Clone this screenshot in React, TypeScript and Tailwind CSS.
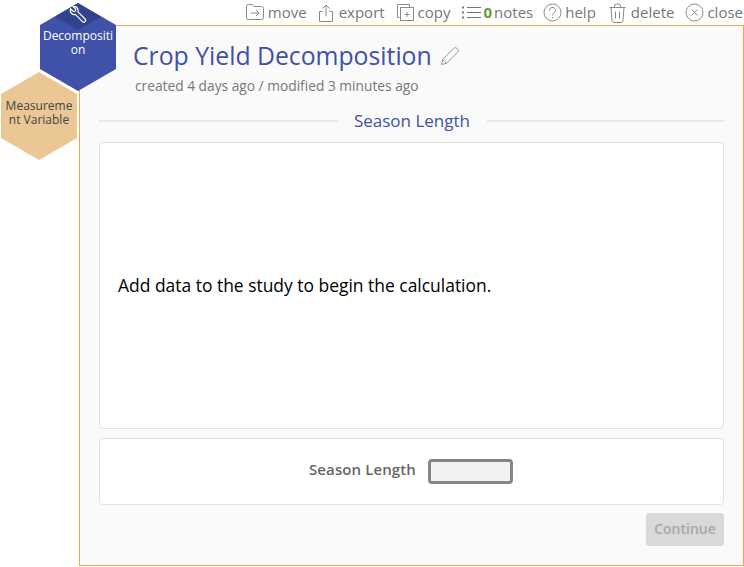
import React from "react";

const hexClip = "[clip-path:polygon(50%_0,100%_25%,100%_75%,50%_100%,0_75%,0_25%)]";

const MoveIcon = () => (
  <svg width="18" height="17" viewBox="0 0 18 17" fill="none" stroke="#8a8a8a" strokeWidth="1">
    <path d="M.500 2.500a2 2 0 0 1 2-2h4l1.500 2h7.500a2 2 0 0 1 2 2v9a2 2 0 0 1-2 2h-13a2 2 0 0 1-2-2z" />
    <path d="M5 9h8M10 6l3 3-3 3" />
  </svg>
);
const ExportIcon = () => (
  <svg width="16" height="18" viewBox="0 0 16 18" fill="none" stroke="#8a8a8a" strokeWidth="1">
    <path d="M4.500 7.500H1.500v10h13v-10h-3" />
    <path d="M8 12.500V1M4.500 4.500L8 1l3.500 3.500" />
  </svg>
);
const CopyIcon = () => (
  <svg width="18" height="17" viewBox="0 0 18 17" fill="none" stroke="#8a8a8a" strokeWidth="1">
    <path d="M2.500 13.500h-2v-13h12v3" />
    <rect x="3.500" y="3.500" width="13" height="13" />
    <path d="M10 8v5M7.500 10.500h5" />
  </svg>
);
const NotesIcon = () => (
  <svg width="20" height="16" viewBox="0 0 20 16" fill="none" stroke="#777777" strokeWidth="1">
    <path d="M5 2.500h14M5 7.500h14M5 12.500h14" />
    <path d="M0 2.500h2M0 7.500h2M0 12.500h2" strokeWidth="2" />
  </svg>
);
const HelpIcon = () => (
  <svg width="19" height="19" viewBox="0 0 19 19" fill="none" stroke="#8a8a8a" strokeWidth="1">
    <circle cx="9.500" cy="9.500" r="8.500" />
    <path d="M6.500 7.500a3 3 0 1 1 4.500 2.500c-1 .6-1.500 1.100-1.500 2.300" />
    <path d="M9.500 14v1.200" />
  </svg>
);
const TrashIcon = () => (
  <svg width="17" height="20" viewBox="0 0 17 20" fill="none" stroke="#8a8a8a" strokeWidth="1">
    <path d="M.500 4.500h16M5.500 4.500V3a2 2 0 0 1 2-2h2a2 2 0 0 1 2 2v1.500" />
    <path d="M2 4.500l1 13a2 2 0 0 0 2 2h7a2 2 0 0 0 2-2l1-13" />
    <path d="M6.500 8.500v7M10.500 8.500v7" />
  </svg>
);
const CloseIcon = () => (
  <svg width="19" height="19" viewBox="0 0 19 19" fill="none" stroke="#8a8a8a" strokeWidth="1">
    <circle cx="9.500" cy="9.500" r="8.500" />
    <path d="M6.500 6.500l6 6M12.500 6.500l-6 6" />
  </svg>
);
const WrenchIcon = () => (
  <svg width="20" height="20" viewBox="0 0 20 20" fill="none" stroke="#ffffff" strokeWidth="1.200">
    <path d="M2.500 2.800l3 2.700 1.800-.5.500-1.800-2.700-2.700c2.600-.7 5.200 1.400 5 4.300l-.2 1 7.200 7.200a1.800 1.800 0 0 1-2.600 2.600L7.300 8.400l-1 .2c-2.900.2-4.500-2.900-3.800-5.800z" />
  </svg>
);
const PencilIcon = () => (
  <svg width="20" height="20" viewBox="0 0 20 20" fill="none" stroke="#999999" strokeWidth="1">
    <path d="M1.500 18.500l1.200-5L14 2.200a2 2 0 0 1 2.800 0l1 1a2 2 0 0 1 0 2.800L6.500 17.300z" />
    <path d="M2.700 13.500l3.800 3.800" />
  </svg>
);

export default function App() {
  return (
    <div className="relative w-[744px] h-[567px] bg-white font-['Open_Sans',sans-serif] overflow-hidden">
      {/* top toolbar */}
      <div className="h-[25px] flex items-center justify-end pr-px text-[15px] text-[#777777]">
        <div className="flex items-center gap-[4px]">
          <MoveIcon />
          <span>move</span>
        </div>
        <div className="flex items-center gap-[5px] ml-[11px]">
          <ExportIcon />
          <span>export</span>
        </div>
        <div className="flex items-center gap-[3px] ml-[12px]">
          <CopyIcon />
          <span>copy</span>
        </div>
        <div className="flex items-center gap-[2px] ml-[11px]">
          <NotesIcon />
          <span className="font-bold text-[#6a9a35]">0</span>
          <span>notes</span>
        </div>
        <div className="flex items-center gap-[3px] ml-[10px]">
          <HelpIcon />
          <span>help</span>
        </div>
        <div className="flex items-center gap-[5px] ml-[13px]">
          <TrashIcon />
          <span>delete</span>
        </div>
        <div className="flex items-center gap-[3px] ml-[11px]">
          <CloseIcon />
          <span>close</span>
        </div>
      </div>

      {/* main panel */}
      <div className="ml-[79px] w-[665px] h-[541px] border border-[#e6a94f] bg-[#fafafa] pt-[12px] px-[19px]">
        <div className="pl-[34px] flex items-center gap-[8px] h-[36px]">
          <h1 className="text-[24.750px] leading-[36px] text-[#3f51a8]">Crop Yield Decomposition</h1>
          <PencilIcon />
        </div>
        <p className="pl-[36px] text-[13.750px] leading-[20px] mt-[2px] text-[#777777]">
          created 4 days ago / modified 3 minutes ago
        </p>
        <div className="flex items-center mt-[14px] h-[22px]">
          <div className="flex-1 h-[2px] bg-[#e8e8e8]" />
          <span className="pl-[16px] pr-[17px] text-[17px] text-[#3f51a8]">Season Length</span>
          <div className="w-[237px] h-[2px] bg-[#e8e8e8]" />
        </div>
        <div className="mt-[10px] h-[287px] bg-white border border-[#e2e2e2] rounded-[4px] flex items-center pl-[18px] pb-[1px]">
          <p className="text-[17.450px] text-black">Add data to the study to begin the calculation.</p>
        </div>
        <div className="mt-[9px] h-[67px] bg-white border border-[#e2e2e2] rounded-[4px] flex items-center gap-[12px] pl-[209px]">
          <span className="text-[15px] font-semibold text-[#666666] tracking-[0.100px] mb-[4px]">Season Length</span>
          <input
            className="w-[85px] h-[25px] bg-[#f2f2f2] border-[3px] border-[#858585] rounded-[4px]"
            readOnly
          />
        </div>
        <div className="flex justify-end mt-[8px]">
          <button className="w-[78px] h-[33px] rounded-[3px] bg-[#d9d9d9] text-[14px] font-semibold text-[#a8a8a8] pb-[2px]">
            Continue
          </button>
        </div>
      </div>

      {/* study hexagons */}
      <div className={`absolute left-[40px] top-[3px] w-[76px] h-[88px] bg-[#3f51a8] ${hexClip} flex flex-col items-center`}>
        <div className="absolute left-[15px] top-0 w-[46px] h-[27px] bg-[#33428c] [clip-path:polygon(50%_0,100%_50%,50%_100%,0_50%)]" />
        <div className="absolute left-[28px] top-[3px]">
          <WrenchIcon />
        </div>
        <p className="relative mt-[26px] w-[72px] text-center text-[12px] leading-[14px] font-medium text-white break-all">
          Decomposition
        </p>
      </div>
      <div className={`absolute left-[1px] top-[72px] w-[76px] h-[88px] bg-[#eac794] ${hexClip} flex items-center justify-center pb-[7px]`}>
        <p className="w-[70px] text-center text-[12px] leading-[14px] text-[#444444] break-all">
          Measurement Variable
        </p>
      </div>
    </div>
  );
}
